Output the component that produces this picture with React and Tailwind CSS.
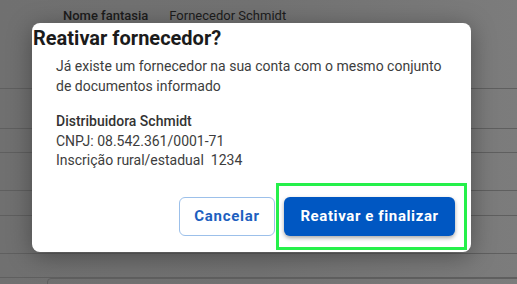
export default function App() {
  const rows = [88, 128, 152, 190, 215, 253, 277];
  return (
    <div
      className="relative w-[517px] h-[284px] overflow-hidden bg-[#767676]"
      style={{ fontFamily: "Roboto, 'Liberation Sans', sans-serif" }}
    >
      {/* Page behind overlay */}
      <div className="absolute inset-0 bg-gradient-to-r from-[#707070] via-[#727272] to-[#7c7c7c]" />
      <div className="absolute left-[63px] top-[6px] flex gap-[21px] text-[13px] text-[#1c1c1c]">
        <span className="font-medium">Nome fantasia</span>
        <span>Fornecedor Schmidt</span>
      </div>
      {rows.map((y) => (
        <div key={y} className="absolute left-0 right-0 h-px bg-[#5f5f5f]" style={{ top: y }} />
      ))}
      <div className="absolute left-[47px] top-[278px] w-[480px] h-[20px] rounded border border-[#5f5f5f]" />

      {/* Dialog */}
      <div className="absolute left-[32px] top-[23px] w-[439px] h-[229px] bg-white rounded-[8px] shadow-[0_4px_24px_rgba(0,0,0,0.35)] flex flex-col">
        <h2 className="ml-px mt-[2px] text-[20px] leading-[26px] font-bold text-[#1b1b1b]">
          Reativar fornecedor?
        </h2>
        <div className="pl-[24px] pt-[5px] text-[#3d3d3d]">
          <p className="whitespace-nowrap text-[14px] leading-[20px]">
            Já existe um fornecedor na sua conta com o mesmo conjunto
            <br />
            de documentos informado
          </p>
          <div className="mt-[16px] text-[14px] leading-[19.5px]">
            <p className="font-medium text-[#333]">Distribuidora Schmidt</p>
            <p>CNPJ: 08.542.361/0001-71</p>
            <p>Inscrição rural/estadual&nbsp;&nbsp;1234</p>
          </div>
        </div>
        <div className="mt-auto mb-[2px] mr-[4px] flex items-center justify-end gap-[1px]">
          <button className="h-[39px] w-[96px] rounded-[6px] border border-[#9cc0ea] text-[15px] font-bold tracking-[0.05em] text-[#1d5fbf]">
            Cancelar
          </button>
          <div className="border-[3px] border-[#25f04a] pl-[5px] pr-[9px] py-[11px]">
            <button className="h-[39px] w-[171px] rounded-[6px] bg-[#0057c2] text-[15px] font-bold tracking-[0.04em] text-white shadow-[0_2px_4px_rgba(0,0,0,0.35)]">
              Reativar e finalizar
            </button>
          </div>
        </div>
      </div>
    </div>
  );
}
